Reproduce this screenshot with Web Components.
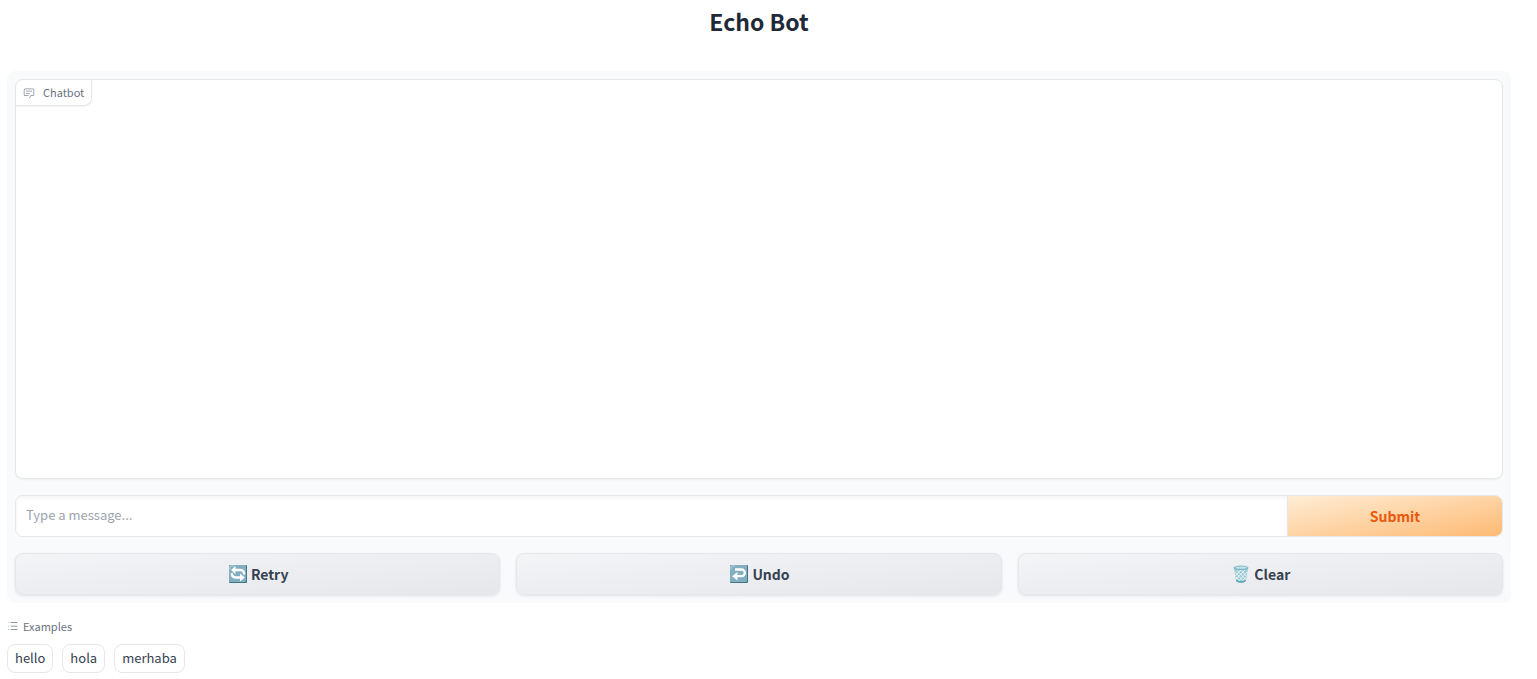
<!DOCTYPE html>
<html lang="en">
<head>
<meta charset="utf-8">
<meta name="viewport" content="width=device-width, initial-scale=1">
<title>Echo Bot</title>
<style>
  body { margin: 0; background: #fff; color: #1f2937; font-family: "Noto Sans CJK SC", "Open Sans", sans-serif; }
</style>
</head>
<body>
<echo-app></echo-app>
<script>
function define(name, html, setup) {
  const template = document.createElement('template');
  template.innerHTML = html;
  customElements.define(name, class extends HTMLElement {
    constructor() {
      super();
      this.attachShadow({ mode: 'open' }).append(template.content.cloneNode(true));
    }
    connectedCallback() { if (setup) setup(this, this.shadowRoot); }
  });
}

const glyphs = {
  chat: ['0 0 32 32', '<path fill="currentColor" d="M17.74 30L16 29l4-7h6a2 2 0 0 0 2-2V8a2 2 0 0 0-2-2H6a2 2 0 0 0-2 2v12a2 2 0 0 0 2 2h9v2H6a4 4 0 0 1-4-4V8a4 4 0 0 1 4-4h20a4 4 0 0 1 4 4v12a4 4 0 0 1-4 4h-4.84Z"/><path fill="currentColor" d="M8 10h16v2H8zm0 6h10v2H8z"/>'],
  list: ['0 0 32 32', '<path fill="currentColor" d="M10 6h18v2H10zm0 18h18v2H10zm0-9h18v2H10zm-6 0h2v2H4zm0-9h2v2H4zm0 18h2v2H4z"/>'],
  retry: ['0 0 18 18', '<rect width="18" height="18" rx="1" fill="#427687"/><rect width="17" height="17" rx="1" fill="#82aebf"/><path d="M1 5V2q0-1 1-1h3" fill="none" stroke="#b4cfd9"/><path d="M6 5h5c3 0 4.200 1.300 4.200 4.500M11 12.500H7c-3 0-4.200-1.300-4.200-4.500" fill="none" stroke="#fff" stroke-width="2.400"/><path d="M6.500 1v8L2 5zM11 8.500v8l4.800-4z" fill="#fff"/>'],
  undo: ['0 0 18 18', '<rect width="18" height="18" rx="1" fill="#427687"/><rect width="17" height="17" rx="1" fill="#82aebf"/><path d="M1 5V2q0-1 1-1h3" fill="none" stroke="#b4cfd9"/><path d="M5 4.500h6.500a3.300 3.300 0 0 1 0 6.700H6" fill="none" stroke="#fff" stroke-width="2.300"/><path d="M7.500 7v8.500L2 11.200z" fill="#fff"/>'],
  bin: ['0 0 18 18', '<path d="M2 3h14l-2 13q-5 3-10 0z" fill="#9fcbd6"/><path d="M3 7l9 10M4 12l5 5M5 5l9 10M9 5l5 6M15 7L6 17M14 12l-5 5M13 5L4 14M9 5L3 11" stroke="#edf7f9" stroke-width=".8"/><path d="M4 15q5 2 10 0l-.3 1.500q-4.700 2.400-9.400 0z" fill="#58a5b7"/><ellipse cx="9" cy="2.800" rx="7.500" ry="2.300" fill="#75b7c7"/><ellipse cx="9" cy="2.600" rx="6" ry="1.200" fill="#c8e1e7"/>']
};

define('ui-icon', `
  <style>
    :host { display: block; flex: none; width: var(--icon-size, 12px); height: var(--icon-size, 12px); }
    svg { display: block; width: 100%; height: 100%; }
  </style>
  <svg aria-hidden="true"></svg>`, (host, root) => {
    const [box, shapes] = glyphs[host.getAttribute('name')];
    const svg = root.querySelector('svg');
    svg.setAttribute('viewBox', box);
    svg.innerHTML = shapes;
  });

define('chat-log', `
  <style>
    :host { display: block; box-sizing: border-box; height: 400px; border: 1px solid #e5e7eb; border-radius: 8px; background: #fff; box-shadow: 0 1px 2px rgba(0,0,0,.05); overflow: hidden; }
    .label { display: inline-flex; align-items: center; gap: 8px; box-sizing: border-box; height: 26px; padding: 0 7px 2px; border: solid #e5e7eb; border-width: 0 1px 1px 0; border-radius: 0 0 8px 0; box-shadow: 0 1px 2px rgba(0,0,0,.05); color: #6b7280; font-size: 11px; line-height: 16px; vertical-align: top; }
    ui-icon { margin-top: 2px; opacity: .8; }
  </style>
  <div class="label"><ui-icon name="chat"></ui-icon><span><slot></slot></span></div>`);

define('message-box', `
  <style>
    :host { display: block; }
    form { display: flex; box-sizing: border-box; height: 42px; border: 1px solid #e5e7eb; border-radius: 8px; background: #fff; overflow: hidden; }
    input { flex: 1; min-width: 0; border: 0; outline: 0; padding: 0 10px 2px; background: #fff; box-shadow: inset 0 2px 4px rgba(0,0,0,.05); color: #1f2937; font: 13px/20px "Noto Sans CJK SC", "Open Sans", sans-serif; }
    input::placeholder { color: #9ca3af; opacity: 1; }
    button { flex: none; box-sizing: border-box; width: 215px; border: 0; border-left: 1px solid #e5e7eb; background: linear-gradient(to bottom right, #ffedd5, #fdba74) padding-box; color: #ea580c; font: bold 14px/20px "Noto Sans CJK SC", "Open Sans", sans-serif; }
  </style>
  <form onsubmit="return false">
    <input type="text" aria-label="Message" placeholder="Type a message...">
    <button type="submit">Submit</button>
  </form>`);

define('action-button', `
  <style>
    :host { display: block; flex: 1; min-width: 0; --icon-size: 18px; }
    button { display: flex; align-items: center; justify-content: center; gap: 4px; box-sizing: border-box; width: 100%; height: 42px; padding: 0 0 0 2px; border: 1px solid #e5e7eb; border-radius: 8px; background: linear-gradient(to bottom right, #f3f4f6, #e5e7eb); box-shadow: 0 1px 3px rgba(0,0,0,.1); color: #374151; font: bold 14px/20px "Noto Sans CJK SC", "Open Sans", sans-serif; }
  </style>
  <button type="button"><slot name="icon"></slot><span><slot></slot></span></button>`);

define('example-chip', `
  <style>
    :host { display: block; }
    button { display: block; box-sizing: border-box; height: 29px; padding: 0 7px 2px; border: 1px solid #e5e7eb; border-radius: 8px; background: #fff; color: #374151; font: 13px/20px "Noto Sans CJK SC", "Open Sans", sans-serif; }
  </style>
  <button type="button"><slot></slot></button>`);

define('example-list', `
  <style>
    :host { display: block; }
    .label { display: flex; align-items: center; gap: 4px; margin-bottom: 10px; color: #6b7280; font-size: 11px; line-height: 16px; }
    .items { display: flex; flex-wrap: wrap; gap: 9px; }
  </style>
  <div class="label"><ui-icon name="list"></ui-icon><span>Examples</span></div>
  <div class="items"><slot></slot></div>`);

define('echo-app', `
  <style>
    :host { display: block; padding: 5px 26px 6px 7px; }
    h1 { margin: 0 0 34px; text-align: center; font-size: 23px; line-height: 32px; font-weight: 600; }
    .panel { display: flex; flex-direction: column; gap: 16px; padding: 8px; border-radius: 8px; background: #f9fafb; }
    .actions { display: flex; gap: 16px; }
    example-list { margin-top: 15px; }
  </style>
  <main>
    <h1>Echo Bot</h1>
    <div class="panel">
      <chat-log>Chatbot</chat-log>
      <message-box></message-box>
      <div class="actions">
        <action-button><ui-icon slot="icon" name="retry"></ui-icon>Retry</action-button>
        <action-button><ui-icon slot="icon" name="undo"></ui-icon>Undo</action-button>
        <action-button><ui-icon slot="icon" name="bin"></ui-icon>Clear</action-button>
      </div>
    </div>
    <example-list>
      <example-chip>hello</example-chip>
      <example-chip>hola</example-chip>
      <example-chip>merhaba</example-chip>
    </example-list>
  </main>`);
</script>
</body>
</html>
